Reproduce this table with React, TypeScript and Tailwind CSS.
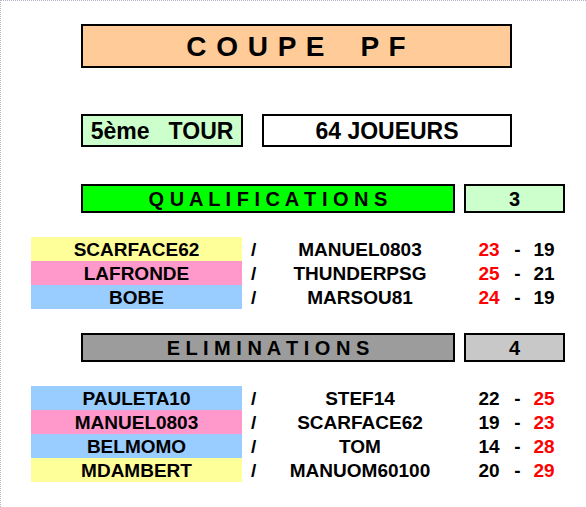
import React from "react";

type Match = {
  home: string;
  away: string;
  s1: number;
  s2: number;
  bg: string;
  winner: 1 | 2;
};

const qualifs: Match[] = [
  { home: "SCARFACE62", away: "MANUEL0803", s1: 23, s2: 19, bg: "bg-[#ffff99]", winner: 1 },
  { home: "LAFRONDE", away: "THUNDERPSG", s1: 25, s2: 21, bg: "bg-[#ff99cc]", winner: 1 },
  { home: "BOBE", away: "MARSOU81", s1: 24, s2: 19, bg: "bg-[#99ccff]", winner: 1 },
];

const elims: Match[] = [
  { home: "PAULETA10", away: "STEF14", s1: 22, s2: 25, bg: "bg-[#99ccff]", winner: 2 },
  { home: "MANUEL0803", away: "SCARFACE62", s1: 19, s2: 23, bg: "bg-[#ff99cc]", winner: 2 },
  { home: "BELMOMO", away: "TOM", s1: 14, s2: 28, bg: "bg-[#99ccff]", winner: 2 },
  { home: "MDAMBERT", away: "MANUOM60100", s1: 20, s2: 29, bg: "bg-[#ffff99]", winner: 2 },
];

const MatchRow = ({ m }: { m: Match }) => (
  <div className="flex h-[24px] text-[19px] leading-[26px]">
    <div className={`${m.bg} w-[211px] text-center`}>{m.home}</div>
    <div className="w-[28px] pl-[9px]">/</div>
    <div className="w-[180px] text-center">{m.away}</div>
    <div className={`ml-[24px] w-[30px] text-center ${m.winner === 1 ? "text-[#ff0000]" : ""}`}>
      {m.s1}
    </div>
    <div className="w-[27px] text-center">-</div>
    <div className={`w-[26px] text-center ${m.winner === 2 ? "text-[#ff0000]" : ""}`}>
      {m.s2}
    </div>
  </div>
);

const SectionHeader = ({ label, count, bar, box }: { label: string; count: number; bar: string; box: string }) => (
  <div className="flex ml-[80px] gap-[9px] text-[20px] leading-[27px]">
    <div className={`${bar} w-[374px] h-[29px] border-2 border-black text-center whitespace-pre`}>
      {label}
    </div>
    <div className={`${box} w-[101px] h-[29px] border-2 border-black text-center`}>{count}</div>
  </div>
);

export default function App() {
  return (
    <div
      className="w-[586px] h-[507px] bg-white text-black font-bold border-t border-l border-dotted border-[#b8b0c8] overflow-hidden"
      style={{ fontFamily: '"Liberation Sans", Arial, sans-serif' }}
    >
      {/* title */}
      <div className="ml-[80px] mt-[23px] w-[431px] h-[44px] border-2 border-black bg-[#ffcc99] text-center text-[28px] leading-[42px] tracking-[1px] whitespace-pre">
        {"C O U P E    P F"}
      </div>

      <div className="flex ml-[80px] mt-[46px] gap-[19px] text-[23px] leading-[30px]">
        <div className="w-[162px] h-[33px] border-2 border-black bg-[#ccffcc] text-center whitespace-pre">
          {"5ème   TOUR"}
        </div>
        <div className="w-[250px] h-[33px] border-2 border-black bg-white text-center">64 JOUEURS</div>
      </div>

      <div className="mt-[37px]">
        <SectionHeader label="Q U A L I F I C A T I O N S" count={3} bar="bg-[#00ff00]" box="bg-[#ccffcc]" />
      </div>

      <div className="mt-[24px] ml-[30px]">
        {qualifs.map((m) => (
          <MatchRow key={m.home} m={m} />
        ))}
      </div>

      <div className="mt-[24px]">
        <SectionHeader label="E L I M I N A T I O N S" count={4} bar="bg-[#9c9c9c]" box="bg-[#c8c8c8]" />
      </div>

      <div className="mt-[24px] ml-[30px]">
        {elims.map((m) => (
          <MatchRow key={m.home} m={m} />
        ))}
      </div>
    </div>
  );
}
